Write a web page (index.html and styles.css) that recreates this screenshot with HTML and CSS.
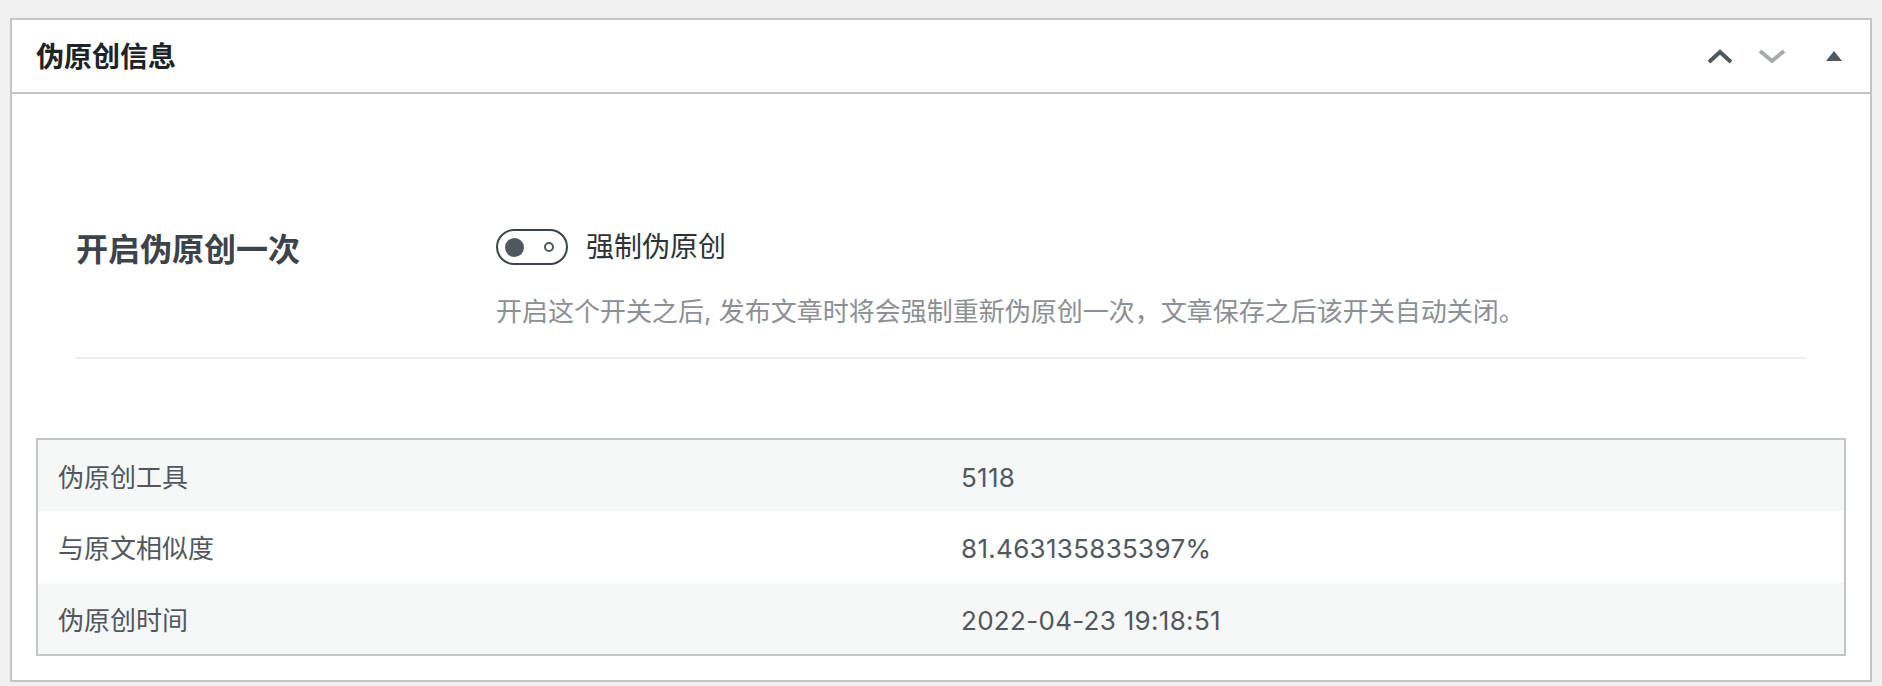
FILE: index.html
```html
<!DOCTYPE html>
<html lang="zh-CN">
<head>
    <meta charset="UTF-8">
    <meta name="viewport" content="width=device-width, initial-scale=1.0">
    <title>伪原创信息</title>
    <link rel="stylesheet" href="styles.css">
</head>
<body>
    <div class="postbox">
        <div class="postbox-header">
            <h2 class="postbox-title">伪原创信息</h2>
            <div class="handle-actions">
                <button class="handle-btn btn-up" type="button" aria-label="上移">
                    <svg width="26" height="15" viewBox="0 0 26 15"><path d="M2 13 L13 3 L24 13" fill="none" stroke="#50575e" stroke-width="4"/></svg>
                </button>
                <button class="handle-btn btn-down" type="button" aria-label="下移">
                    <svg width="28" height="15" viewBox="0 0 28 15"><path d="M2 2 L14 12 L26 2" fill="none" stroke="#a7aaad" stroke-width="4"/></svg>
                </button>
                <button class="handle-btn btn-toggle" type="button" aria-label="折叠">
                    <svg width="16" height="10" viewBox="0 0 16 10"><path d="M8 0 L16 10 L0 10 Z" fill="#50575e"/></svg>
                </button>
            </div>
        </div>

        <div class="inside">
            <div class="fields">
                <div class="field">
                    <div class="field-title">开启伪原创一次</div>
                    <div class="field-content">
                        <label class="switch-row">
                            <span class="switch">
                                <span class="switch-knob"></span>
                                <span class="switch-ring"></span>
                            </span>
                            <span class="switch-label">强制伪原创</span>
                        </label>
                        <p class="field-desc">开启这个开关之后, 发布文章时将会强制重新伪原创一次，文章保存之后该开关自动关闭。</p>
                    </div>
                </div>
            </div>

            <!-- 伪原创结果 -->
            <table class="meta-table">
                <tbody>
                    <tr class="alt">
                        <td>伪原创工具</td>
                        <td class="value">5118</td>
                    </tr>
                    <tr>
                        <td>与原文相似度</td>
                        <td class="value">81.463135835397%</td>
                    </tr>
                    <tr class="alt">
                        <td>伪原创时间</td>
                        <td class="value">2022-04-23 19:18:51</td>
                    </tr>
                </tbody>
            </table>
        </div>
    </div>
</body>
</html>
```

FILE: styles.css
```css
body {
    margin: 0;
    padding: 18px 10px 0;
    background-color: #f0f0f1;
    font-family: Inter, "Noto Sans CJK SC", sans-serif;
    color: #3c434a;
}

/* 面板 */
.postbox {
    background-color: #fff;
    border: 2px solid #c3c4c7;
}

.postbox-header {
    display: flex;
    align-items: center;
    justify-content: space-between;
    height: 72px;
    border-bottom: 2px solid #c3c4c7;
}

.postbox-title {
    margin: 0;
    padding: 2px 0 0 24px;
    font-size: 28px;
    font-weight: bold;
    line-height: 40px;
    color: #1d2327;
}

.handle-actions {
    display: flex;
    align-items: center;
    height: 100%;
}

.handle-btn {
    display: flex;
    align-items: center;
    justify-content: center;
    height: 72px;
    padding: 0;
    border: none;
    background: none;
    cursor: pointer;
}

.btn-up,
.btn-down {
    width: 52px;
}

.btn-toggle {
    width: 72px;
}

/* 内容 */
.inside {
    padding: 0 24px 24px;
}

.fields {
    padding: 0 40px;
}

.field {
    display: flex;
    padding: 135px 0 25px;
    border-bottom: 2px solid #eeeeee;
}

.field-title {
    width: 420px;
    flex-shrink: 0;
    font-size: 32px;
    font-weight: bold;
    line-height: 42px;
    color: #3c434a;
}

.field-content {
    flex: 1;
}

.switch-row {
    display: flex;
    align-items: center;
    gap: 18px;
    cursor: pointer;
}

.switch {
    box-sizing: border-box;
    display: flex;
    align-items: center;
    justify-content: space-between;
    width: 72px;
    height: 36px;
    padding: 0 12px 0 7px;
    border: 2px solid #3c434a;
    border-radius: 18px;
}

.switch-knob {
    width: 19px;
    height: 19px;
    border-radius: 50%;
    background-color: #50575e;
}

.switch-ring {
    box-sizing: border-box;
    width: 10px;
    height: 10px;
    border: 2px solid #50575e;
    border-radius: 50%;
}

.switch-label {
    font-size: 28px;
    line-height: 36px;
    color: #2c3338;
}

.field-desc {
    margin: 27px 0 0;
    font-size: 26px;
    line-height: 40px;
    color: #8c8f94;
}

/* 表格 */
.meta-table {
    width: 100%;
    margin-top: 79px;
    border: 2px solid #c3c4c7;
    border-spacing: 0;
    font-size: 26px;
    color: #50575e;
}

.meta-table td {
    width: 50%;
    padding: 18px 20px 14px;
    line-height: 39.3px;
}

.meta-table td.value {
    letter-spacing: 0.3px;
}

.meta-table tr.alt {
    background-color: #f6f7f7;
}
```
